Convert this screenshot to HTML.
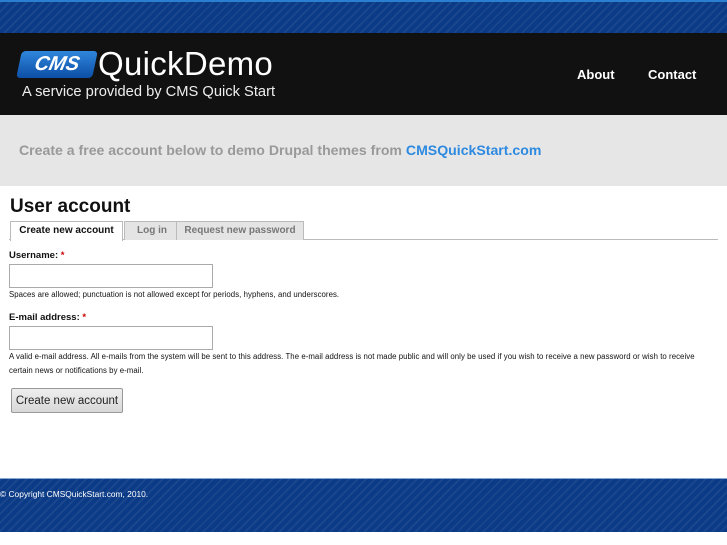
<!DOCTYPE html>
<html><head><meta charset="utf-8"><style>
*{margin:0;padding:0;box-sizing:border-box}
body{width:727px;height:545px;overflow:hidden;background:#fff;font-family:"Liberation Sans",sans-serif;position:relative}
.top{position:absolute;left:0;top:0;width:727px;height:33px;background:#0b3a86;border-top:2px solid #2a7fd0;
background-image:repeating-linear-gradient(135deg,rgba(255,255,255,.06) 0 2px,transparent 2px 6px)}
.hdr{position:absolute;left:0;top:33px;width:727px;height:82px;background:#111}
.cms{position:absolute;left:19px;top:18px;width:76px;height:27px;background:linear-gradient(#2f86dc,#0d4fa6);border-radius:4px;transform:skewX(-12deg);color:#fff;font-style:italic;font-weight:bold;font-size:20px;text-align:center;line-height:27px}
.qd{position:absolute;left:98px;top:12px;color:#fff;font-size:33px;letter-spacing:0.3px}
.sv{position:absolute;left:22px;top:51px;color:#eee;font-size:14.7px}
.nav{position:absolute;top:34px;color:#fff;font-weight:bold;font-size:13px}
.band{position:absolute;left:0;top:115px;width:727px;height:71px;background:#e6e6e6;color:#999;font-weight:bold;font-size:14.1px;padding:27px 0 0 19px}
.band span{color:#2d8ae0}
h1{position:absolute;left:10px;top:196px;font-size:19px;color:#111}
.tabs{position:absolute;left:9px;top:221px;width:709px;height:19px;border-bottom:1px solid #bbb}
.tab{position:absolute;top:0;height:19px;border:1px solid #bbb;border-bottom:none;background:#e4e4e4;color:#777;font-size:10px;font-weight:bold;line-height:18px;text-align:center}
.tab.a{background:#fff;color:#111;height:20px}
.lbl{position:absolute;left:9px;font-size:9.5px;font-weight:bold;color:#111}
.lbl i{color:#c00;font-style:normal}
.in{position:absolute;left:9px;width:204px;height:24px;border:1px solid #aaa;background:#fff}
.d{position:absolute;left:9px;font-size:7.8px;color:#111;line-height:14px;width:705px;letter-spacing:0.06px}
.btn{position:absolute;left:11px;top:388px;width:112px;height:25px;border:1px solid #999;border-radius:2px;background:linear-gradient(#eee,#d8d8d8);font-size:11.5px;color:#222;text-align:center;line-height:25px}
.ft{position:absolute;left:0;top:478px;width:727px;height:54px;background:#0b3a86;border-top:1px solid #8aa8d8;
background-image:repeating-linear-gradient(135deg,rgba(255,255,255,.06) 0 2px,transparent 2px 6px);color:#fff;font-size:8.4px;padding:10px 0 0 0}
</style></head><body>
<div class="top"></div>
<div class="hdr">
<div class="cms">CMS</div>
<div class="qd">QuickDemo</div>
<div class="sv">A service provided by CMS Quick Start</div>
<div class="nav" style="left:577px">About</div>
<div class="nav" style="left:648px">Contact</div>
</div>
<div class="band">Create a free account below to demo Drupal themes from <span>CMSQuickStart.com</span></div>
<h1>User account</h1>
<div class="tabs">
<div class="tab a" style="left:1px;width:113px">Create new account</div>
<div class="tab" style="left:115px;width:56px">Log in</div>
<div class="tab" style="left:167px;width:128px">Request new password</div>
</div>
<div class="lbl" style="top:250px">Username: <i>*</i></div>
<div class="in" style="top:264px"></div>
<div class="d" style="top:288px">Spaces are allowed; punctuation is not allowed except for periods, hyphens, and underscores.</div>
<div class="lbl" style="top:312px">E-mail address: <i>*</i></div>
<div class="in" style="top:326px"></div>
<div class="d" style="top:350px">A valid e-mail address. All e-mails from the system will be sent to this address. The e-mail address is not made public and will only be used if you wish to receive a new password or wish to receive certain news or notifications by e-mail.</div>
<div class="btn">Create new account</div>
<div class="ft">© Copyright CMSQuickStart.com, 2010.</div>
</body></html>
